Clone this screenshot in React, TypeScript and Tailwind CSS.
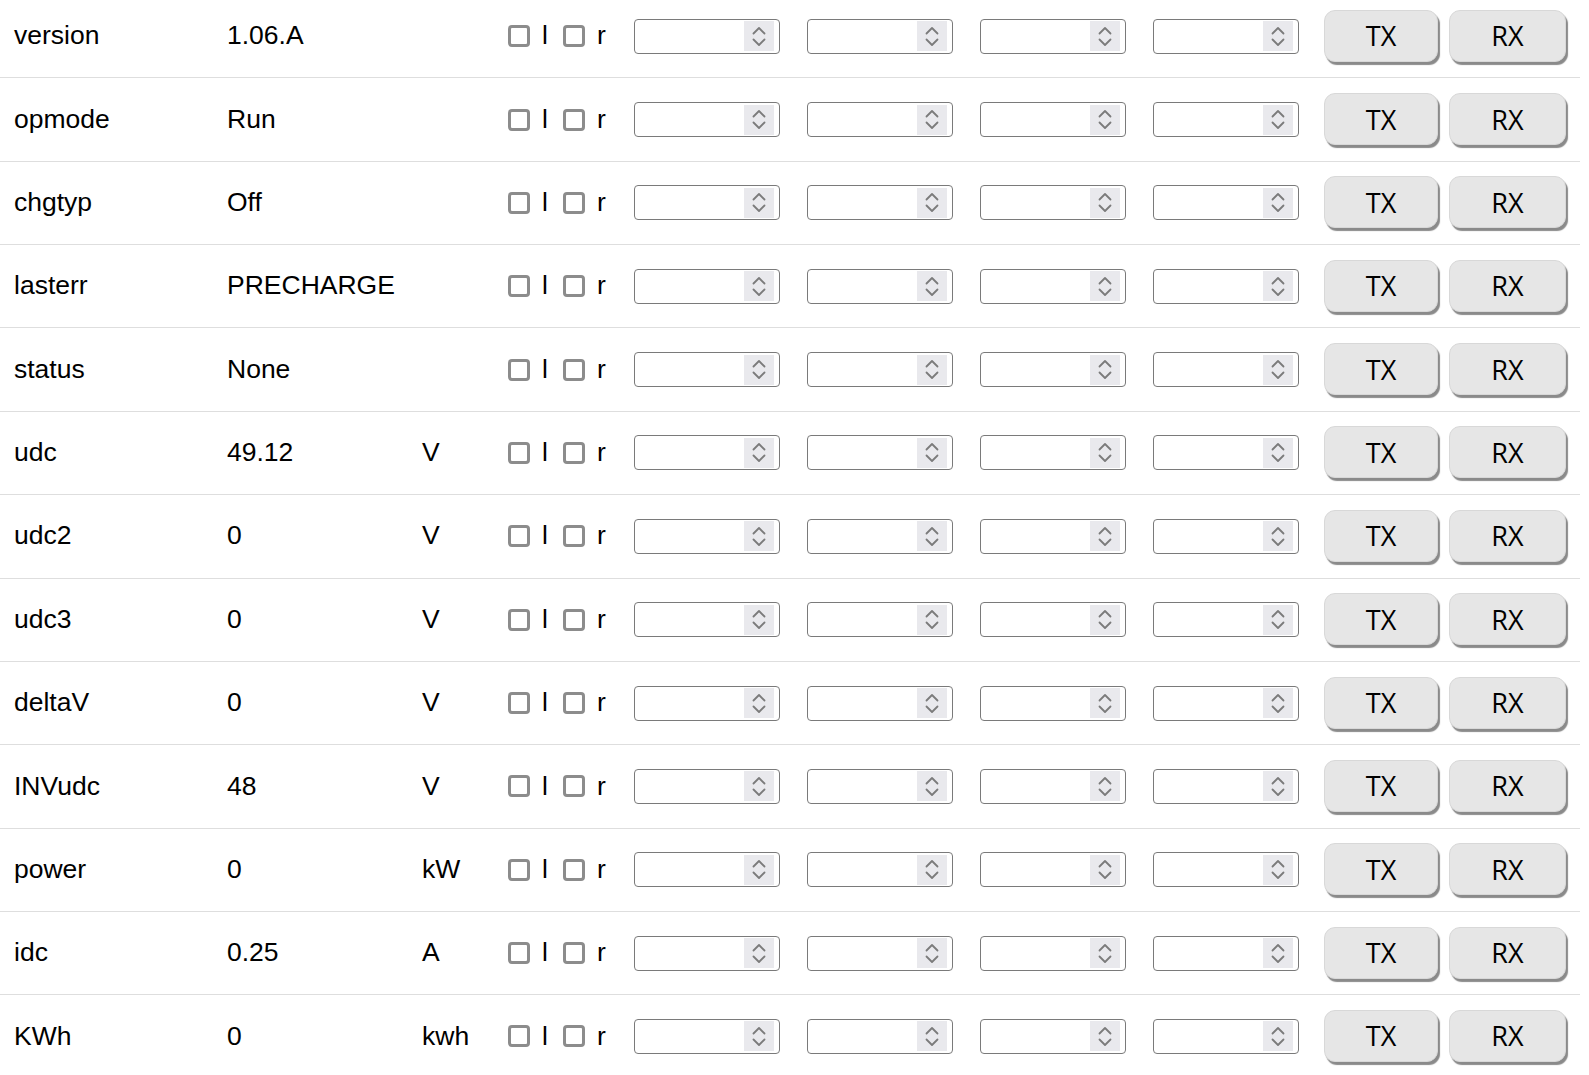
import React from "react";

const rows: [string, string, string][] = [
  ["version", "1.06.A", ""],
  ["opmode", "Run", ""],
  ["chgtyp", "Off", ""],
  ["lasterr", "PRECHARGE", ""],
  ["status", "None", ""],
  ["udc", "49.12", "V"],
  ["udc2", "0", "V"],
  ["udc3", "0", "V"],
  ["deltaV", "0", "V"],
  ["INVudc", "48", "V"],
  ["power", "0", "kW"],
  ["idc", "0.25", "A"],
  ["KWh", "0", "kwh"],
];

function Box() {
  return <span className="block w-[22px] h-[22px] border-[3px] border-[#8c8c8c] rounded-[4px] bg-white" />;
}

function NumInput({ first }: { first?: boolean }) {
  return (
    <div
      className={`${first ? "ml-[27px]" : "ml-[27px]"} w-[146px] h-[35px] border border-[#7a7a7a] rounded-[4px] bg-white flex items-center justify-end pr-[5px]`}
    >
      <div className="w-[30px] h-[30px] bg-[#e9e9ed] flex flex-col items-center justify-center gap-[3px]">
        <svg width="14" height="9" viewBox="0 0 14 9" fill="none">
          <path d="M1.5 7.5 L7 2 L12.5 7.5" stroke="#7b7b7b" strokeWidth="1.8" strokeLinecap="round" strokeLinejoin="round" />
        </svg>
        <svg width="14" height="9" viewBox="0 0 14 9" fill="none">
          <path d="M1.5 1.5 L7 7 L12.5 1.5" stroke="#7b7b7b" strokeWidth="1.8" strokeLinecap="round" strokeLinejoin="round" />
        </svg>
      </div>
    </div>
  );
}

function Btn({ label, w }: { label: string; w: string }) {
  return (
    <button
      className={`${w} h-[52px] bg-[#e6e6e6] rounded-[11px] border border-[#d8d8d8] shadow-[2px_3px_1px_#8a8a8a] text-black text-[27px] leading-none flex items-center justify-center`}
      style={{ fontFamily: '"Open Sans", "Noto Sans", sans-serif' }}
    >
      {label}
    </button>
  );
}

export default function App() {
  return (
    <div
      className="bg-white w-[1589px] h-[1075px] overflow-hidden text-black"
      style={{ fontFamily: '"Liberation Sans", Arial, sans-serif' }}
    >
      <div className="-mt-[5px] w-[1580px]">
        {rows.map(([name, val, unit]) => (
          <div
            key={name}
            className="h-[83.36px] border-b border-[#dedede] flex items-center pl-[14px] text-[26.5px]"
          >
            <div className="w-[213px]">{name}</div>
            <div className="w-[195px]">{val}</div>
            <div className="w-[86px]">{unit}</div>
            <Box />
            <span className="ml-[12px] w-[21px]">l</span>
            <Box />
            <span className="ml-[12px] w-[10px]">r</span>
            <NumInput first />
            <NumInput />
            <NumInput />
            <NumInput />
            <div className="ml-[25px] flex gap-[11px] items-center mt-[-1px]">
              <Btn label="TX" w="w-[114px]" />
              <Btn label="RX" w="w-[117px]" />
            </div>
          </div>
        ))}
      </div>
    </div>
  );
}
